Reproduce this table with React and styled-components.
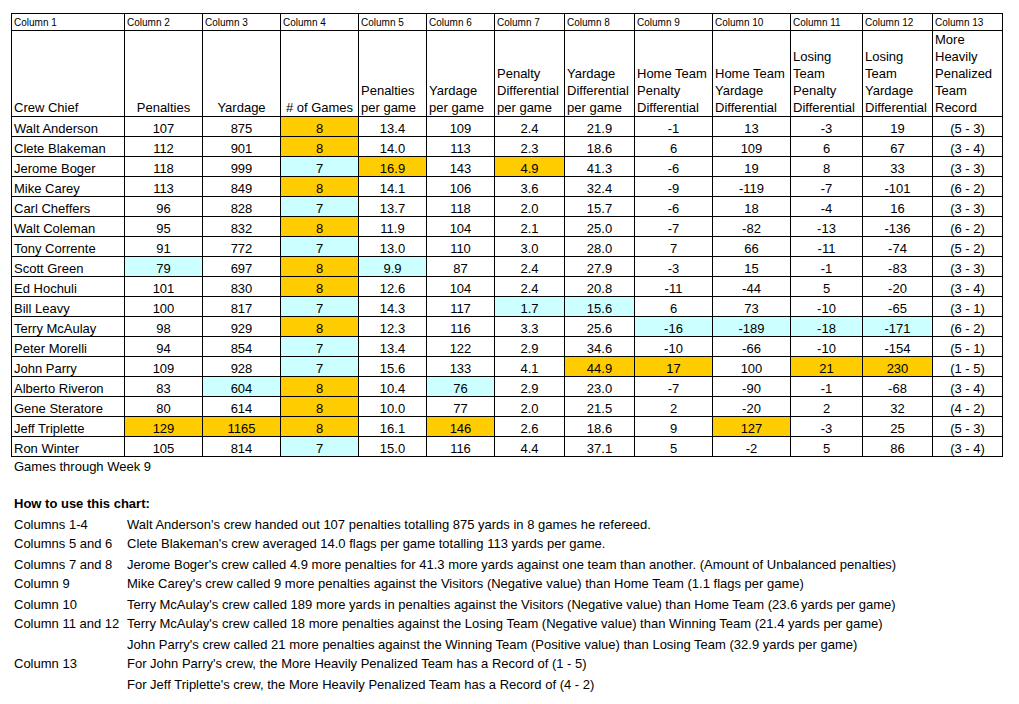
import React from 'react';
import styled, { createGlobalStyle } from 'styled-components';

const GlobalStyle = createGlobalStyle`
    html, body {
        margin: 0;
        padding: 0;
        background: #ffffff;
    }
    body {
        font-family: 'Liberation Sans', Arial, sans-serif;
        color: #000000;
    }
`;

const FILLS = {
    o: '#ffcc00',
    c: '#ccffff',
};

const Page = styled.div`
    width: 1019px;
    height: 704px;
    padding: 13px 0 0 11px;
    box-sizing: border-box;
    overflow: hidden;
`;

const Sheet = styled.table`
    border-collapse: collapse;
    table-layout: fixed;
    width: 992px;
    font-size: 13px;
`;

const LabelRow = styled.tr`
    height: 17px;
`;

const TitleRow = styled.tr`
    height: 86px;
`;

const DataRow = styled.tr`
    height: 20px;
`;

const LabelCell = styled.td`
    border: 1px solid #000;
    padding: 0 2px 1px;
    font-size: 10px;
    line-height: 12px;
    vertical-align: bottom;
    white-space: nowrap;
    overflow: hidden;
`;

const TitleCell = styled.td`
    border: 1px solid #000;
    padding: 0 2px;
    line-height: 17px;
    vertical-align: bottom;
    text-align: ${p => p.$align};
    white-space: nowrap;
`;

const Cell = styled.td`
    border: 1px solid #000;
    padding: 4px 2px 0;
    line-height: 15px;
    vertical-align: top;
    text-align: ${p => p.$align};
    background: ${p => p.$fill || 'transparent'};
    white-space: nowrap;
    overflow: hidden;
`;

const Notes = styled.div`
    display: grid;
    grid-template-columns: 113px 1fr;
    padding-left: 3px;
    font-size: 13px;
    line-height: 20px;
`;

const Caption = styled.div`
    grid-column: 1 / 3;
    height: 20px;
`;

const Heading = styled.div`
    grid-column: 1 / 3;
    margin-top: 17px;
    height: 21px;
    font-weight: bold;
`;

const NoteLabel = styled.div`
    height: ${p => p.$h}px;
    white-space: nowrap;
`;

const NoteText = styled.div`
    height: ${p => p.$h}px;
    white-space: nowrap;
`;

const widths = [113, 78, 78, 78, 68, 68, 70, 70, 78, 78, 72, 70, 70];

const titles = [
    { lines: ['Crew Chief'], align: 'left' },
    { lines: ['Penalties'], align: 'center' },
    { lines: ['Yardage'], align: 'center' },
    { lines: ['# of Games'], align: 'center' },
    { lines: ['Penalties', 'per game'], align: 'left' },
    { lines: ['Yardage', 'per game'], align: 'left' },
    { lines: ['Penalty', 'Differential', 'per game'], align: 'left' },
    { lines: ['Yardage', 'Differential', 'per game'], align: 'left' },
    { lines: ['Home Team', 'Penalty', 'Differential'], align: 'left' },
    { lines: ['Home Team', 'Yardage', 'Differential'], align: 'left' },
    { lines: ['Losing', 'Team', 'Penalty', 'Differential'], align: 'left' },
    { lines: ['Losing', 'Team', 'Yardage', 'Differential'], align: 'left' },
    { lines: ['More', 'Heavily', 'Penalized', 'Team', 'Record'], align: 'left' },
];

// "o:" = orange fill (high), "c:" = cyan fill (low)
const rows = [
    ['Walt Anderson', '107', '875', 'o:8', '13.4', '109', '2.4', '21.9', '-1', '13', '-3', '19', '(5 - 3)'],
    ['Clete Blakeman', '112', '901', 'o:8', '14.0', '113', '2.3', '18.6', '6', '109', '6', '67', '(3 - 4)'],
    ['Jerome Boger', '118', '999', 'c:7', 'o:16.9', '143', 'o:4.9', '41.3', '-6', '19', '8', '33', '(3 - 3)'],
    ['Mike Carey', '113', '849', 'o:8', '14.1', '106', '3.6', '32.4', '-9', '-119', '-7', '-101', '(6 - 2)'],
    ['Carl Cheffers', '96', '828', 'c:7', '13.7', '118', '2.0', '15.7', '-6', '18', '-4', '16', '(3 - 3)'],
    ['Walt Coleman', '95', '832', 'o:8', '11.9', '104', '2.1', '25.0', '-7', '-82', '-13', '-136', '(6 - 2)'],
    ['Tony Corrente', '91', '772', 'c:7', '13.0', '110', '3.0', '28.0', '7', '66', '-11', '-74', '(5 - 2)'],
    ['Scott Green', 'c:79', '697', 'o:8', 'c:9.9', '87', '2.4', '27.9', '-3', '15', '-1', '-83', '(3 - 3)'],
    ['Ed Hochuli', '101', '830', 'o:8', '12.6', '104', '2.4', '20.8', '-11', '-44', '5', '-20', '(3 - 4)'],
    ['Bill Leavy', '100', '817', 'c:7', '14.3', '117', 'c:1.7', 'c:15.6', '6', '73', '-10', '-65', '(3 - 1)'],
    ['Terry McAulay', '98', '929', 'o:8', '12.3', '116', '3.3', '25.6', 'c:-16', 'c:-189', 'c:-18', 'c:-171', '(6 - 2)'],
    ['Peter Morelli', '94', '854', 'c:7', '13.4', '122', '2.9', '34.6', '-10', '-66', '-10', '-154', '(5 - 1)'],
    ['John Parry', '109', '928', 'c:7', '15.6', '133', '4.1', 'o:44.9', 'o:17', '100', 'o:21', 'o:230', '(1 - 5)'],
    ['Alberto Riveron', '83', 'c:604', 'o:8', '10.4', 'c:76', '2.9', '23.0', '-7', '-90', '-1', '-68', '(3 - 4)'],
    ['Gene Steratore', '80', '614', 'o:8', '10.0', '77', '2.0', '21.5', '2', '-20', '2', '32', '(4 - 2)'],
    ['Jeff Triplette', 'o:129', 'o:1165', 'o:8', '16.1', 'o:146', '2.6', '18.6', '9', 'o:127', '-3', '25', '(5 - 3)'],
    ['Ron Winter', '105', '814', 'c:7', '15.0', '116', '4.4', '37.1', '5', '-2', '5', '86', '(3 - 4)'],
];

const notes = [
    { label: 'Columns 1-4', text: "Walt Anderson's crew handed out 107 penalties totalling 875 yards in 8 games he refereed.", h: 19 },
    { label: 'Columns 5 and 6', text: "Clete Blakeman's crew averaged 14.0 flags per game totalling 113 yards per game.", h: 21 },
    { label: 'Columns 7 and 8', text: "Jerome Boger's crew called 4.9 more penalties for 41.3 more yards against one team than another. (Amount of Unbalanced penalties)", h: 19 },
    { label: 'Column 9', text: "Mike Carey's crew called 9 more penalties against the Visitors (Negative value) than Home Team (1.1 flags per game)", h: 21 },
    { label: 'Column 10', text: "Terry McAulay's crew called 189 more yards in penalties against the Visitors (Negative value) than Home Team (23.6 yards per game)", h: 19 },
    { label: 'Column 11 and 12', text: "Terry McAulay's crew called 18 more penalties against the Losing Team (Negative value) than Winning Team (21.4 yards per game)", h: 21 },
    { label: '', text: "John Parry's crew called 21 more penalties against the Winning Team (Positive value) than Losing Team (32.9 yards per game)", h: 19 },
    { label: 'Column 13', text: "For John Parry's crew, the More Heavily Penalized Team has a Record of (1 - 5)", h: 21 },
    { label: '', text: "For Jeff Triplette's crew, the More Heavily Penalized Team has a Record of (4 - 2)", h: 20 },
];

const parse = raw => {
    const m = /^([oc]):(.*)$/.exec(raw);
    return m ? { fill: FILLS[m[1]], value: m[2] } : { fill: null, value: raw };
};

export default function App() {
    return (
        <>
            <GlobalStyle />
            <Page>
                <Sheet>
                    <colgroup>
                        {widths.map((w, i) => (
                            <col key={i} style={{ width: w }} />
                        ))}
                    </colgroup>
                    <thead>
                        <LabelRow>
                            {widths.map((_, i) => (
                                <LabelCell key={i}>Column {i + 1}</LabelCell>
                            ))}
                        </LabelRow>
                        <TitleRow>
                            {titles.map((t, i) => (
                                <TitleCell key={i} $align={t.align}>
                                    {t.lines.map((line, j) => (
                                        <React.Fragment key={j}>
                                            {j > 0 && <br />}
                                            {line}
                                        </React.Fragment>
                                    ))}
                                </TitleCell>
                            ))}
                        </TitleRow>
                    </thead>
                    <tbody>
                        {rows.map(row => (
                            <DataRow key={row[0]}>
                                {row.map((raw, i) => {
                                    const { fill, value } = parse(raw);
                                    return (
                                        <Cell key={i} $align={i === 0 ? 'left' : 'center'} $fill={fill}>
                                            {value}
                                        </Cell>
                                    );
                                })}
                            </DataRow>
                        ))}
                    </tbody>
                </Sheet>
                <Notes>
                    <Caption>Games through Week 9</Caption>
                    <Heading>How to use this chart:</Heading>
                    {notes.map((n, i) => (
                        <React.Fragment key={i}>
                            <NoteLabel $h={n.h}>{n.label}</NoteLabel>
                            <NoteText $h={n.h}>{n.text}</NoteText>
                        </React.Fragment>
                    ))}
                </Notes>
            </Page>
        </>
    );
}
